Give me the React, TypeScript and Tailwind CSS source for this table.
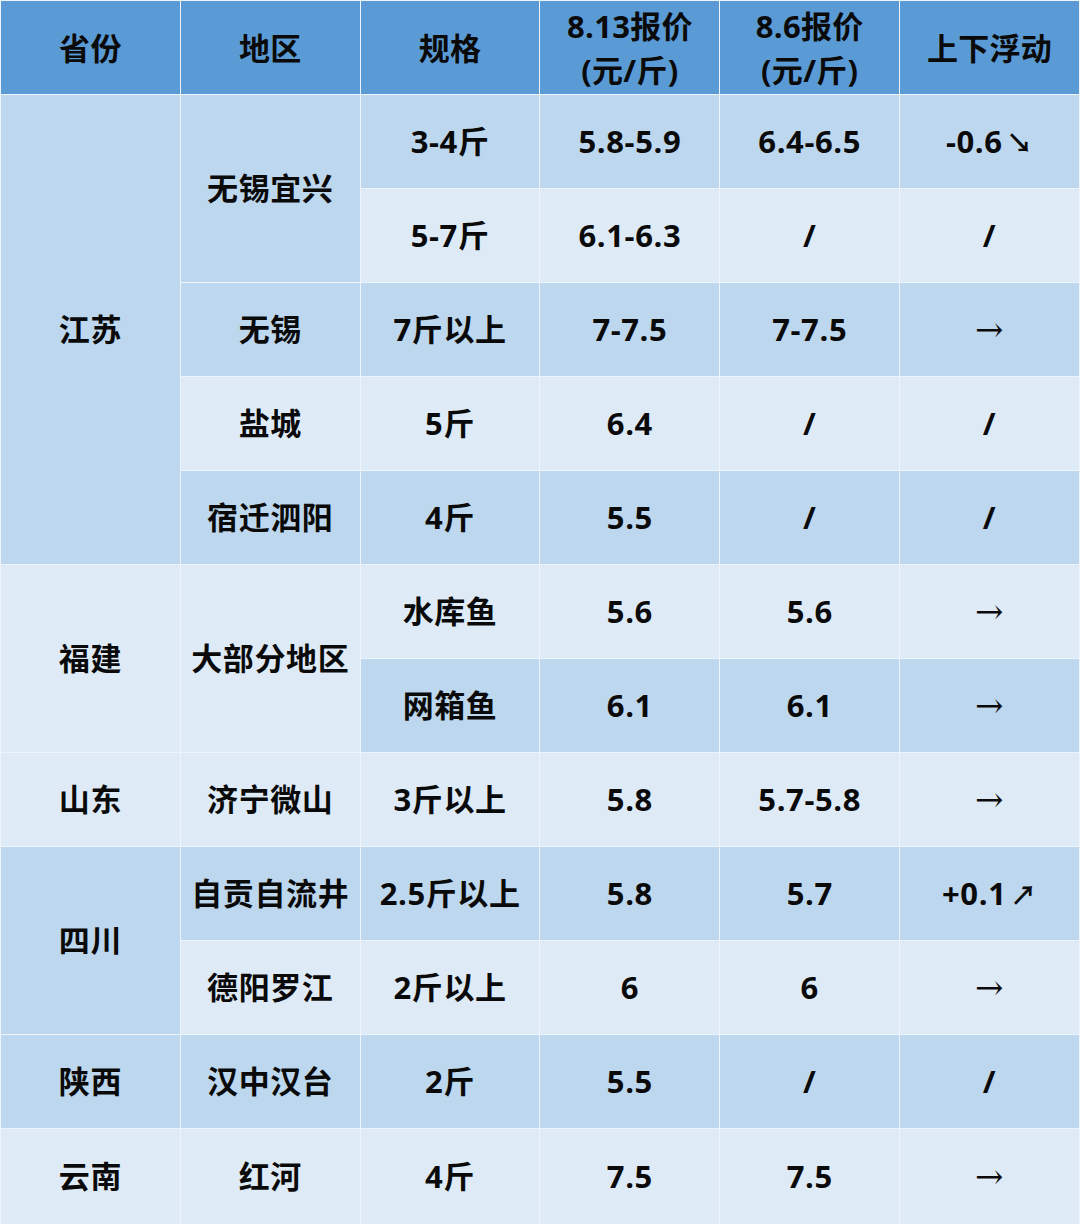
import React from 'react'

type Cell = { text: React.ReactNode; rowSpan?: number }
type Row = { dark: boolean; cells: Cell[] }

const Up = () => <span className="ml-1 text-[26px]">↗</span>
const Down = () => <span className="ml-1 text-[26px]">↘</span>
const Flat = () => (
  <span className="font-normal text-[34px]" style={{ fontFamily: '"DejaVu Serif", "Liberation Serif", serif' }}>
    →
  </span>
)

const rows: Row[] = [
  {
    dark: true,
    cells: [
      { text: '江苏', rowSpan: 5 },
      { text: '无锡宜兴', rowSpan: 2 },
      { text: '3-4斤' },
      { text: '5.8-5.9' },
      { text: '6.4-6.5' },
      { text: <>-0.6<Down /></> },
    ],
  },
  { dark: false, cells: [{ text: '5-7斤' }, { text: '6.1-6.3' }, { text: '/' }, { text: '/' }] },
  {
    dark: true,
    cells: [{ text: '无锡' }, { text: '7斤以上' }, { text: '7-7.5' }, { text: '7-7.5' }, { text: <Flat /> }],
  },
  {
    dark: false,
    cells: [{ text: '盐城' }, { text: '5斤' }, { text: '6.4' }, { text: '/' }, { text: '/' }],
  },
  {
    dark: true,
    cells: [{ text: '宿迁泗阳' }, { text: '4斤' }, { text: '5.5' }, { text: '/' }, { text: '/' }],
  },
  {
    dark: false,
    cells: [
      { text: '福建', rowSpan: 2 },
      { text: '大部分地区', rowSpan: 2 },
      { text: '水库鱼' },
      { text: '5.6' },
      { text: '5.6' },
      { text: <Flat /> },
    ],
  },
  { dark: true, cells: [{ text: '网箱鱼' }, { text: '6.1' }, { text: '6.1' }, { text: <Flat /> }] },
  {
    dark: false,
    cells: [
      { text: '山东' },
      { text: '济宁微山' },
      { text: '3斤以上' },
      { text: '5.8' },
      { text: '5.7-5.8' },
      { text: <Flat /> },
    ],
  },
  {
    dark: true,
    cells: [
      { text: '四川', rowSpan: 2 },
      { text: '自贡自流井' },
      { text: '2.5斤以上' },
      { text: '5.8' },
      { text: '5.7' },
      { text: <>+0.1<Up /></> },
    ],
  },
  {
    dark: false,
    cells: [{ text: '德阳罗江' }, { text: '2斤以上' }, { text: '6' }, { text: '6' }, { text: <Flat /> }],
  },
  {
    dark: true,
    cells: [
      { text: '陕西' },
      { text: '汉中汉台' },
      { text: '2斤' },
      { text: '5.5' },
      { text: '/' },
      { text: '/' },
    ],
  },
  {
    dark: false,
    cells: [
      { text: '云南' },
      { text: '红河' },
      { text: '4斤' },
      { text: '7.5' },
      { text: '7.5' },
      { text: <Flat /> },
    ],
  },
]

const headers: React.ReactNode[] = [
  '省份',
  '地区',
  '规格',
  <>8.13报价<br />(元/斤)</>,
  <>8.6报价<br />(元/斤)</>,
  '上下浮动',
]

export default function App() {
  return (
    <div
      className="w-[1080px] h-[1224px] bg-white text-[#0a0a0a] overflow-hidden"
      style={{ fontFamily: '"Open Sans", "Noto Sans CJK SC", sans-serif' }}
    >
      <table className="w-full h-full table-fixed border-collapse">
        <thead>
          <tr className="h-[94px] bg-[#5b9bd5]">
            {headers.map((h, i) => (
              <th
                key={i}
                className="border-[1.5px] border-[#eef4fa] text-[31px] font-bold leading-[44px] tracking-[0.3px] text-center align-middle"
              >
                {h}
              </th>
            ))}
          </tr>
        </thead>
        <tbody>
          {rows.map((r, i) => (
            <tr key={i} className={i === rows.length - 1 ? 'h-[96px]' : 'h-[94px]'}>
              {r.cells.map((c, j) => (
                <td
                  key={j}
                  rowSpan={c.rowSpan}
                  className={`border-[1.5px] border-[#eef4fa] text-[31px] font-bold tracking-[0.6px] text-center align-middle ${
                    r.dark ? 'bg-[#bdd7ee]' : 'bg-[#deebf7]'
                  }`}
                >
                  {c.text}
                </td>
              ))}
            </tr>
          ))}
        </tbody>
      </table>
    </div>
  )
}
